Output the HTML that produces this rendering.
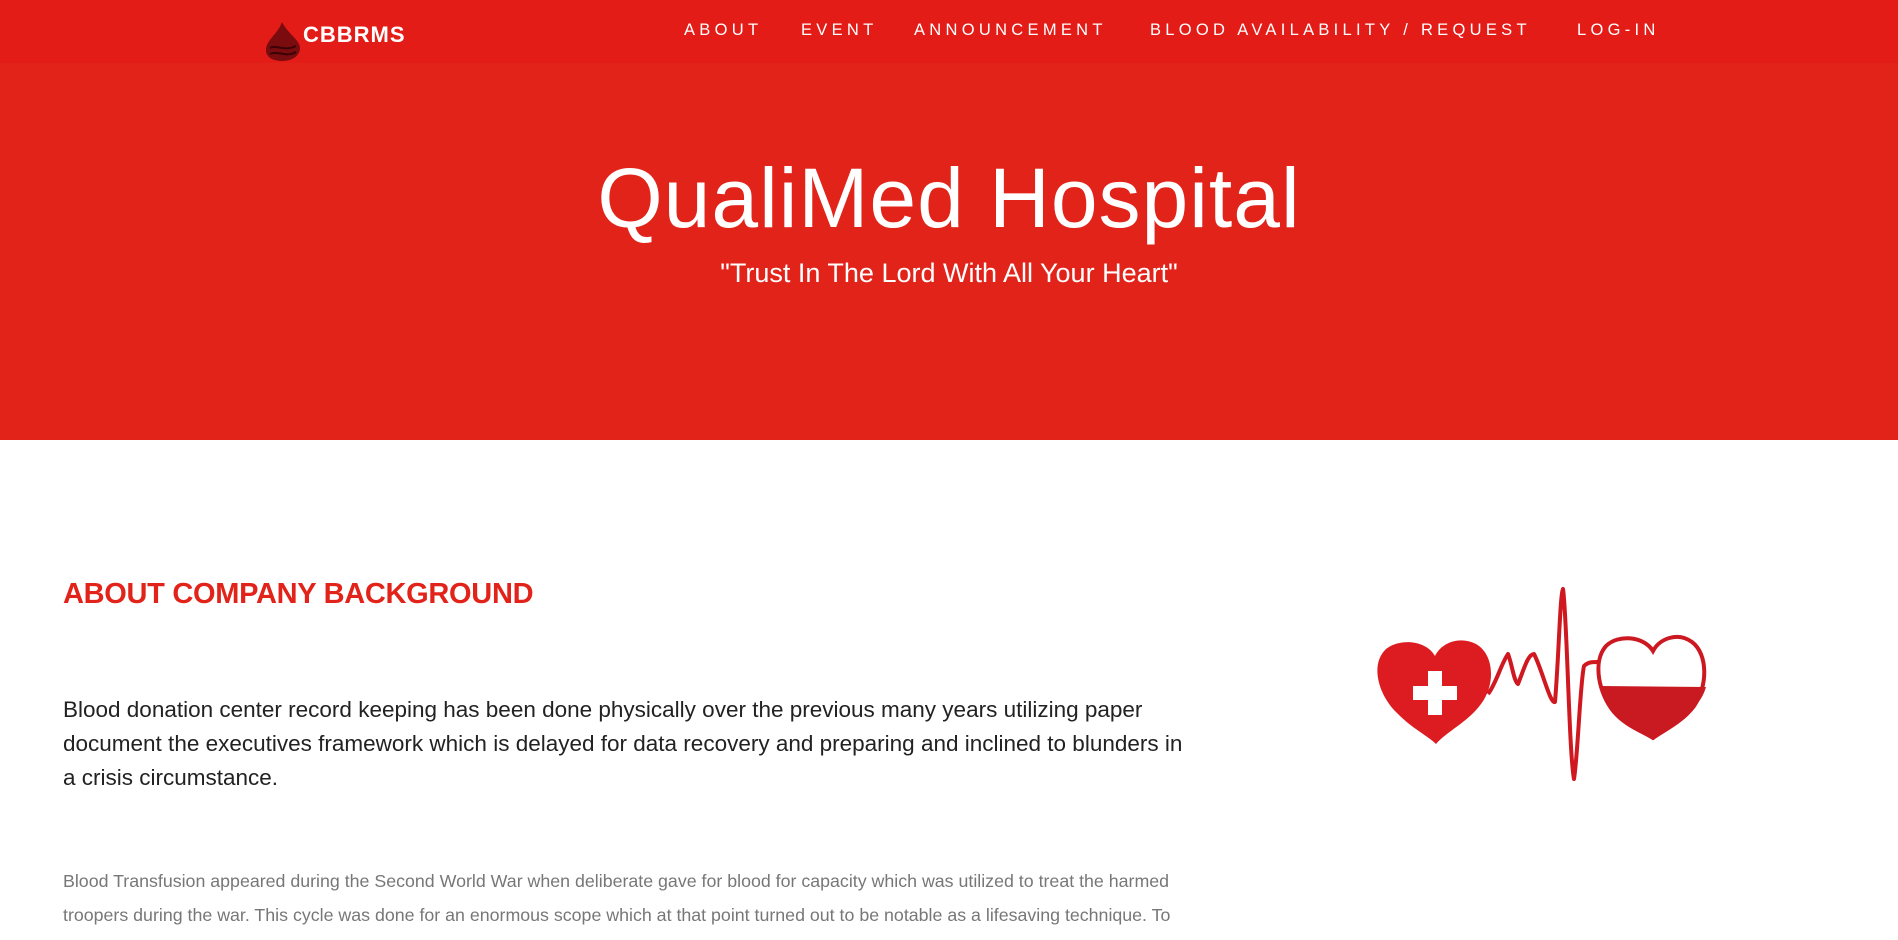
<!DOCTYPE html>
<html><head><meta charset="utf-8"><style>
*{margin:0;padding:0;box-sizing:border-box}
body{width:1898px;height:940px;overflow:hidden;background:#fff;font-family:"Liberation Sans",sans-serif}
.nav{position:absolute;left:0;top:0;width:1898px;height:63px;background:#e41c18}
.hero{position:absolute;left:0;top:63px;width:1898px;height:377px;background:#e2231a}
.nav a{position:absolute;top:21px;color:#fff;font-size:16.5px;letter-spacing:4.3px;text-decoration:none;white-space:nowrap}
h1{position:absolute;left:0;width:1898px;top:87px;text-align:center;color:#fff;font-weight:normal;font-size:84px;letter-spacing:1px}
.sub{position:absolute;left:0;width:1898px;top:195px;text-align:center;color:#fff;font-size:27px}
h2{position:absolute;left:63px;top:578px;color:#e2231a;font-size:29px;font-weight:bold;letter-spacing:-0.3px}
.p1{position:absolute;left:63px;top:693px;width:1300px;font-size:22.5px;line-height:34px;color:#222;white-space:nowrap}
.p2{position:absolute;left:63px;top:864px;width:1300px;font-size:17.8px;line-height:34px;color:#777;white-space:nowrap}
</style></head><body>
<div class="nav">
<svg style="position:absolute;left:262px;top:20px" width="42" height="42" viewBox="0 0 42 42"><path d="M20 2 C16 14 4 20 4 30 C4 38 12 41 20 41 C30 41 38 36 38 28 C38 20 26 14 20 2Z" fill="#7a0c10"/><path d="M8 28 C14 24 22 32 34 26" stroke="#3a0306" stroke-width="2" fill="none"/><path d="M8 34 C16 30 24 38 34 32" stroke="#3a0306" stroke-width="2" fill="none"/></svg>
<span style="position:absolute;left:303px;top:22px;color:#fff;font-weight:bold;font-size:22px;letter-spacing:1px">CBBRMS</span>
<a style="left:684px">ABOUT</a><a style="left:801px">EVENT</a><a style="left:914px">ANNOUNCEMENT</a><a style="left:1150px">BLOOD AVAILABILITY / REQUEST</a><a style="left:1577px">LOG-IN</a>
</div>
<div class="hero"><h1>QualiMed Hospital</h1><div class="sub">"Trust In The Lord With All Your Heart"</div></div>
<h2>ABOUT COMPANY BACKGROUND</h2>
<div class="p1">Blood donation center record keeping has been done physically over the previous many years utilizing paper<br>document the executives framework which is delayed for data recovery and preparing and inclined to blunders in<br>a crisis circumstance.</div>
<div class="p2">Blood Transfusion appeared during the Second World War when deliberate gave for blood for capacity which was utilized to treat the harmed<br>troopers during the war. This cycle was done for an enormous scope which at that point turned out to be notable as a lifesaving technique. To</div>
<svg style="position:absolute;left:1356px;top:554px" width="380" height="235" viewBox="0 0 380 235">
<path d="M79 102 C70 86 44 84 30 95 C14 110 22 140 40 158 C55 174 72 182 80 190 C90 178 112 168 125 150 C140 130 138 100 120 90 C104 82 86 88 79 102Z" fill="#dd1c22"/>
<path d="M72 117 h14 v15 h15 v14 h-15 v15 h-14 v-15 h-15 v-14 h15z" fill="#fff"/>
<path d="M132 140 C140 130 145 110 152 100 C156 110 158 128 162 130 C168 115 172 100 178 100 C186 115 194 150 199 148 C203 100 204 40 207 35 C211 60 213 200 218 225 C222 200 224 130 228 112 C232 108 236 108 242 108" stroke="#d01820" stroke-width="4" fill="none" stroke-linejoin="round"/>
<path d="M297 97 C288 82 262 80 250 92 C236 108 243 140 258 158 C270 172 288 178 297 184 C308 176 326 168 338 152 C352 132 352 100 336 88 C322 78 304 84 297 97Z" fill="#fff" stroke="#cc1820" stroke-width="4"/>
<path d="M245 132 L350 133 C348 140 344 148 338 152 C326 168 308 176 297 184 C288 178 270 172 258 158 C250 150 246 140 245 132Z" fill="#c81a20"/>
</svg>
</body></html>
